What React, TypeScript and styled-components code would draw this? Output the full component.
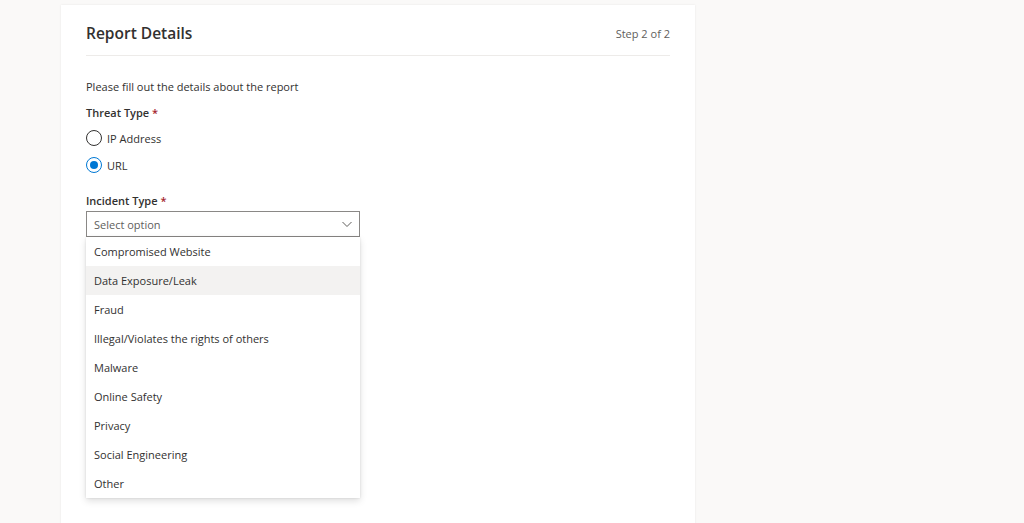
import React from 'react';
import styled, { createGlobalStyle } from 'styled-components';

const Global = createGlobalStyle`
  html, body { margin: 0; background: #faf9f8; font-family: "Open Sans", "Noto Sans", sans-serif; color: #323130; }
`;

const Page = styled.div`
  height: 523px;
  overflow: hidden;
  padding: 5px 0 0 61px;
  box-sizing: border-box;
`;

const Card = styled.div`
  width: 634px;
  height: 540px;
  background: #fff;
  box-shadow: 0 0 2px rgba(0,0,0,0.08);
  padding: 0 25px;
  box-sizing: border-box;
`;

const Header = styled.div`
  display: flex;
  justify-content: space-between;
  align-items: center;
  height: 51px;
  border-bottom: 1px solid #edebe9;
  padding-top: 6px;
  box-sizing: border-box;
`;

const Title = styled.h2`
  margin: 0;
  font-size: 15.5px;
  font-weight: 600;
  color: #323130;
`;

const Step = styled.span`
  font-size: 11px;
  color: #605e5c;
`;

const Intro = styled.p`
  margin: 23px 0 0;
  font-size: 11px;
  color: #323130;
`;

const Label = styled.div<{ $top: number }>`
  margin-top: ${p => p.$top}px;
  font-size: 11px;
  font-weight: 600;
  span { color: #a4262c; }
`;

const RadioRow = styled.label`
  display: flex;
  align-items: center;
  gap: 5px;
  height: 16px;
  margin-top: 10px;
  font-size: 11px;
`;

const Circle = styled.span<{ $on?: boolean }>`
  width: 16px;
  height: 16px;
  box-sizing: border-box;
  border-radius: 50%;
  border: 1px solid ${p => (p.$on ? '#0078d4' : '#323130')};
  display: flex;
  align-items: center;
  justify-content: center;
  &::after {
    content: '';
    display: ${p => (p.$on ? 'block' : 'none')};
    width: 8px;
    height: 8px;
    border-radius: 50%;
    background: #0078d4;
  }
`;

const DropWrap = styled.div`
  width: 274px;
  margin-top: 3px;
  position: relative;
`;

const Select = styled.div`
  height: 26px;
  border: 1px solid #8a8886;
  box-sizing: border-box;
  display: flex;
  align-items: center;
  justify-content: space-between;
  padding: 0 6px 0 7px;
  font-size: 11px;
  color: #605e5c;
`;

const Menu = styled.div`
  position: absolute;
  top: 26px;
  left: 0;
  right: 0;
  background: #fff;
  box-shadow: 0 3px 7px rgba(0,0,0,0.13), 0 0 2px rgba(0,0,0,0.11);
`;

const Item = styled.div<{ $hover?: boolean }>`
  height: 29px;
  display: flex;
  align-items: center;
  padding-left: 8px;
  font-size: 11px;
  background: ${p => (p.$hover ? '#f3f2f1' : '#fff')};
`;

const items = [
  'Compromised Website',
  'Data Exposure/Leak',
  'Fraud',
  'Illegal/Violates the rights of others',
  'Malware',
  'Online Safety',
  'Privacy',
  'Social Engineering',
  'Other',
];

export default function App() {
  return (
    <Page>
      <Global />
      <Card>
        <Header>
          <Title>Report Details</Title>
          <Step>Step 2 of 2</Step>
        </Header>
        <Intro>Please fill out the details about the report</Intro>
        <Label $top={11}>Threat Type <span>*</span></Label>
        <RadioRow><Circle />IP Address</RadioRow>
        <RadioRow style={{ marginTop: 11 }}><Circle $on />URL</RadioRow>
        <Label $top={20}>Incident Type <span>*</span></Label>
        <DropWrap>
          <Select>
            Select option
            <svg width="12" height="12" viewBox="0 0 12 12">
              <path d="M1.5 4 L6 8.5 L10.5 4" fill="none" stroke="#605e5c" strokeWidth="1" />
            </svg>
          </Select>
          <Menu>
            {items.map((t, i) => (
              <Item key={t} $hover={i === 1}>{t}</Item>
            ))}
          </Menu>
        </DropWrap>
      </Card>
    </Page>
  );
}
